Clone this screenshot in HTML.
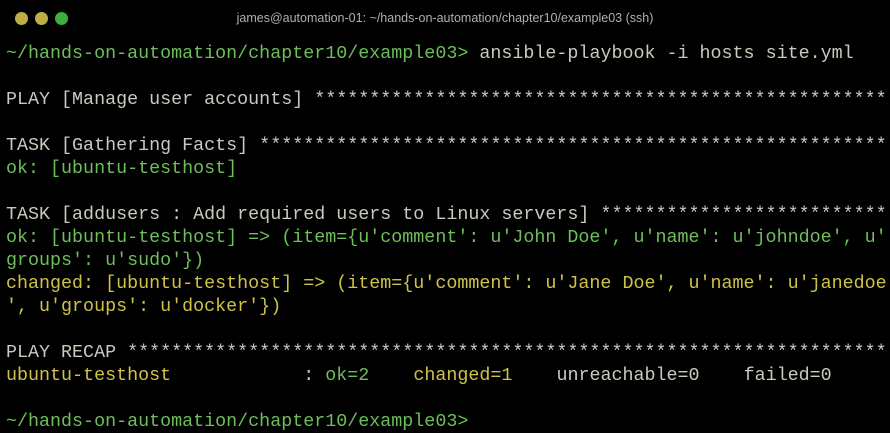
<!DOCTYPE html>
<html><head><meta charset="utf-8"><style>
html,body{margin:0;padding:0;background:#000;width:890px;height:433px;overflow:hidden}
.dot{position:absolute;top:12px;width:13px;height:13px;border-radius:50%}
.title{position:absolute;top:11px;left:0;width:890px;text-align:center;font:12.5px "Liberation Sans",sans-serif;color:#b0b0b0}
.t{position:absolute;left:6px;white-space:pre;font-family:"Liberation Mono",monospace;font-size:18.35px;line-height:23px;color:#c4ccbd;width:880px;overflow:hidden}
.g{color:#6cbf5a}.y{color:#cfc24a}
</style></head><body>
<div class="dot" style="left:15px;background:#bfae45"></div>
<div class="dot" style="left:35px;background:#bfae45"></div>
<div class="dot" style="left:55px;background:#3fae3f"></div>
<div class="title">james@automation-01: ~/hands-on-automation/chapter10/example03 (ssh)</div>
<div class="t g" style="top:42px">~/hands-on-automation/chapter10/example03&gt; <span style="color:#c4ccbd">ansible-playbook -i hosts site.yml</span></div>
<div class="t" style="top:88px">PLAY [Manage user accounts] ***************************************************************</div>
<div class="t" style="top:134px">TASK [Gathering Facts] ********************************************************************</div>
<div class="t g" style="top:157px">ok: [ubuntu-testhost]</div>
<div class="t" style="top:203px">TASK [addusers : Add required users to Linux servers] *************************************</div>
<div class="t g" style="top:226px">ok: [ubuntu-testhost] =&gt; (item={u'comment': u'John Doe', u'name': u'johndoe', u'</div>
<div class="t g" style="top:249px">groups': u'sudo'})</div>
<div class="t y" style="top:272px">changed: [ubuntu-testhost] =&gt; (item={u'comment': u'Jane Doe', u'name': u'janedoe</div>
<div class="t y" style="top:295px">', u'groups': u'docker'})</div>
<div class="t" style="top:341px">PLAY RECAP ********************************************************************************</div>
<div class="t" style="top:364px"><span class="y">ubuntu-testhost</span>            : <span class="g">ok=2</span>    <span class="y">changed=1</span>    unreachable=0    failed=0</div>
<div class="t g" style="top:410px">~/hands-on-automation/chapter10/example03&gt;</div>
</body></html>
